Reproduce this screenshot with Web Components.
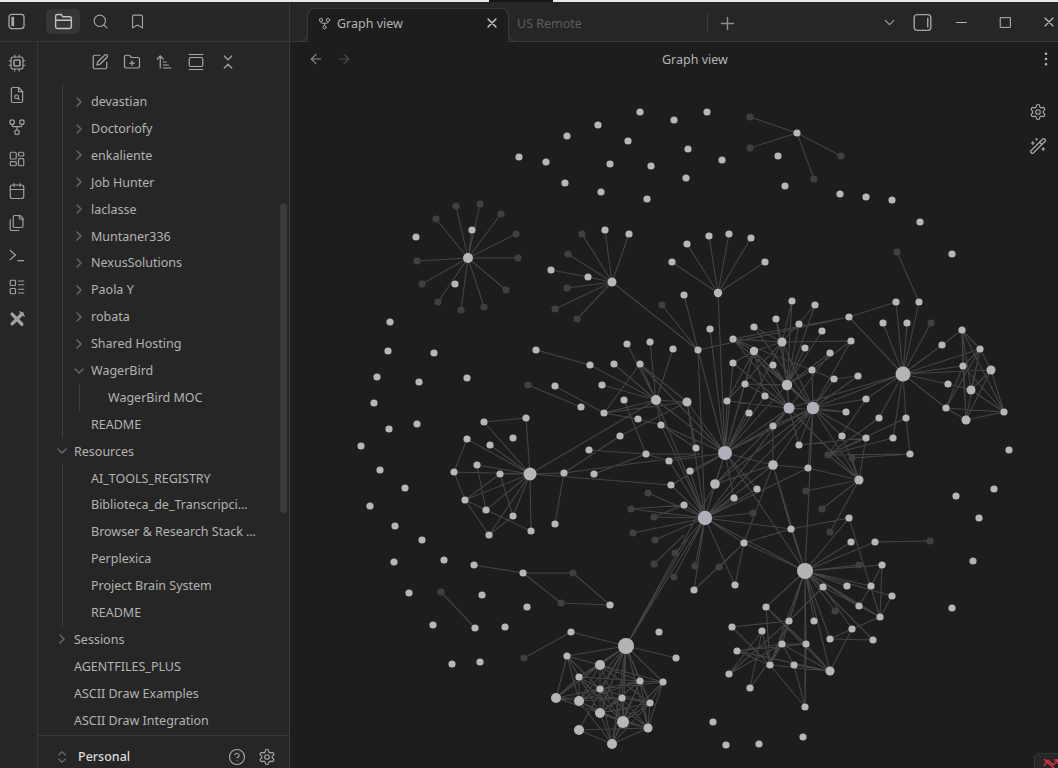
<!DOCTYPE html>
<html>
<head>
<meta charset="utf-8">
<style>
html, body { margin: 0; height: 100%; background: #1d1d1d; overflow: hidden; }
body { font-family: "Noto Sans", sans-serif; }
</style>
</head>
<body>
<app-shell>
    <title-bar slot="top"></title-bar>
    <app-ribbon slot="ribbon"></app-ribbon>
    <file-nav slot="side">
        <tree-group first>
            <tree-item closed in>devastian</tree-item>
            <tree-item closed in>Doctoriofy</tree-item>
            <tree-item closed in>enkaliente</tree-item>
            <tree-item closed in>Job Hunter</tree-item>
            <tree-item closed in>laclasse</tree-item>
            <tree-item closed in>Muntaner336</tree-item>
            <tree-item closed in>NexusSolutions</tree-item>
            <tree-item closed in>Paola Y</tree-item>
            <tree-item closed in>robata</tree-item>
            <tree-item closed in>Shared Hosting</tree-item>
            <tree-item open in>WagerBird</tree-item>
            <tree-group sub><tree-item in>WagerBird MOC</tree-item></tree-group>
            <tree-item in>README</tree-item>
        </tree-group>
        <tree-item open>Resources</tree-item>
        <tree-group>
            <tree-item in>AI_TOOLS_REGISTRY</tree-item>
            <tree-item in>Biblioteca_de_Transcripci…</tree-item>
            <tree-item in>Browser &amp; Research Stack …</tree-item>
            <tree-item in>Perplexica</tree-item>
            <tree-item in>Project Brain System</tree-item>
            <tree-item in>README</tree-item>
        </tree-group>
        <tree-item closed>Sessions</tree-item>
        <tree-item>AGENTFILES_PLUS</tree-item>
        <tree-item>ASCII Draw Examples</tree-item>
        <tree-item>ASCII Draw Integration</tree-item>
    </file-nav>
    <graph-view slot="main"></graph-view>
</app-shell>

<script>
const ICONS = {
    sidebarLeft: '<rect x="2.5" y="3" width="19" height="18" rx="3.5"/><rect x="5.5" y="6" width="3.5" height="12" rx="1" fill="currentColor" stroke="none"/>',
    sidebarRight: '<rect x="2.5" y="3" width="19" height="18" rx="3.5"/><path d="M18 7v10"/>',
    folder: '<path d="M3 18V6a2 2 0 0 1 2-2h4.2l2 2.500H19a2 2 0 0 1 2 2V18a2 2 0 0 1-2 2H5a2 2 0 0 1-2-2Z"/><path d="M3 10.500h18"/>',
    search: '<circle cx="11" cy="11" r="8"/><path d="m21 21-4.300-4.300"/>',
    bookmark: '<path d="m19 21-7-4-7 4V5a2 2 0 0 1 2-2h10a2 2 0 0 1 2 2v16z"/>',
    cpu: '<rect x="4" y="4" width="16" height="16" rx="3"/><rect x="8" y="8" width="8" height="8" rx="1.500" stroke-width="2.200"/><path d="M9 1.500V4M15 1.500V4M9 20v2.500M15 20v2.500M20 9h2.500M20 15h2.500M1.500 9H4M1.500 15H4"/>',
    fileSearch: '<path d="M14 2H6.500a2 2 0 0 0-2 2v16a2 2 0 0 0 2 2h11a2 2 0 0 0 2-2V7.500z"/><path d="M14 2v5.500h5.500"/><circle cx="11.500" cy="14.500" r="2.500"/><path d="m13.500 16.500 1.500 1.500"/>',
    fork: '<circle cx="12" cy="19" r="3"/><circle cx="5.500" cy="5.500" r="3"/><circle cx="18.500" cy="5.500" r="3"/><path d="M18.500 8.500v1.500c0 .8-.5 1.500-1.500 1.500H7c-1 0-1.500-.7-1.500-1.500V8.500M12 11.500V16"/>',
    dashboard: '<rect x="3" y="3" width="8" height="9" rx="1.500"/><rect x="14" y="3" width="7" height="5" rx="1.500"/><rect x="14" y="11.500" width="7" height="9.500" rx="1.500"/><rect x="3" y="15.500" width="8" height="5.500" rx="1.500"/>',
    calendar: '<rect x="3" y="4" width="18" height="18" rx="3"/><path d="M16 2v4M8 2v4M3 10h18"/>',
    files: '<path d="M20 7h-3a2 2 0 0 1-2-2V2"/><path d="M9 18a2 2 0 0 1-2-2V4a2 2 0 0 1 2-2h7l4 4v10a2 2 0 0 1-2 2Z"/><path d="M3 7.600v12.800A1.600 1.600 0 0 0 4.600 22h9.800"/>',
    terminal: '<path d="m3 6 7 6-7 6"/><path d="M13 19.500h8"/>',
    listGrid: '<rect x="3" y="3" width="7" height="7" rx="1"/><rect x="3" y="14" width="7" height="7" rx="1"/><path d="M14 4h7M14 9h7M14 15h7M14 20h7"/>',
    tools: '<path d="M5.500 5.500 18.500 19" stroke-width="4.500"/><path d="M19 5 5.500 18.500" stroke-width="4.500"/><path d="m16 2.500 5.500 5.500" stroke-width="2"/>',
    pen: '<path d="M12 3H5a2 2 0 0 0-2 2v14a2 2 0 0 0 2 2h14a2 2 0 0 0 2-2v-7"/><path d="M18.375 2.625a2.121 2.121 0 1 1 3 3L12 15l-4 1 1-4Z"/>',
    folderPlus: '<path d="M20 20a2 2 0 0 0 2-2V8a2 2 0 0 0-2-2h-7.900a2 2 0 0 1-1.690-.9L9.600 3.900A2 2 0 0 0 7.930 3H4a2 2 0 0 0-2 2v13a2 2 0 0 0 2 2Z"/><path d="M12 10.500v6M9 13.500h6"/>',
    sort: '<path d="m3 8 4-4 4 4"/><path d="M7 4v16"/><path d="M11 12h4M11 16h7M11 20h10"/>',
    gallery: '<path d="M3 2h18"/><rect x="3" y="6" width="18" height="12" rx="2"/><path d="M3 22h18"/>',
    collapse: '<path d="m7 20 5-5 5 5"/><path d="m7 4 5 5 5-5"/>',
    updown: '<path d="m7 15 5 5 5-5"/><path d="m7 9 5-5 5 5"/>',
    help: '<circle cx="12" cy="12" r="10"/><path d="M9.090 9a3 3 0 0 1 5.830 1c0 2-3 3-3 3"/><path d="M12 17h.01"/>',
    gear: '<path d="M12.220 2h-.44a2 2 0 0 0-2 2v.18a2 2 0 0 1-1 1.730l-.43.25a2 2 0 0 1-2 0l-.15-.08a2 2 0 0 0-2.730.73l-.22.38a2 2 0 0 0 .73 2.730l.15.1a2 2 0 0 1 1 1.720v.51a2 2 0 0 1-1 1.740l-.15.09a2 2 0 0 0-.73 2.730l.22.38a2 2 0 0 0 2.730.73l.15-.08a2 2 0 0 1 2 0l.43.25a2 2 0 0 1 1 1.730V20a2 2 0 0 0 2 2h.44a2 2 0 0 0 2-2v-.18a2 2 0 0 1 1-1.730l.43-.25a2 2 0 0 1 2 0l.15.08a2 2 0 0 0 2.730-.73l.22-.39a2 2 0 0 0-.73-2.730l-.15-.08a2 2 0 0 1-1-1.740v-.5a2 2 0 0 1 1-1.740l.15-.09a2 2 0 0 0 .73-2.730l-.22-.38a2 2 0 0 0-2.730-.73l-.15.08a2 2 0 0 1-2 0l-.43-.25a2 2 0 0 1-1-1.730V4a2 2 0 0 0-2-2z"/><circle cx="12" cy="12" r="3"/>',
    wand: '<path d="m21.640 3.640-1.280-1.280a1.210 1.210 0 0 0-1.720 0L2.360 18.640a1.210 1.210 0 0 0 0 1.720l1.280 1.280a1.200 1.200 0 0 0 1.720 0L21.640 5.360a1.200 1.200 0 0 0 0-1.720"/><path d="m14 7 3 3M5 6v4M19 14v4M10 2v2M7 8H3M21 16h-4M11 3H9"/>',
    close: '<path d="M18 6 6 18M6 6l12 12"/>',
    left: '<path d="m12 19-7-7 7-7"/><path d="M19 12H5"/>',
    right: '<path d="M5 12h14"/><path d="m12 5 7 7-7 7"/>',
    plus: '<path d="M5 12h14M12 5v14"/>',
    down: '<path d="m6 9 6 6 6-6"/>',
    chevRight: '<path d="m9 18 6-6-6-6"/>',
    minus: '<path d="M3 12h18"/>',
    square: '<rect x="3" y="3" width="18" height="18"/>',
    more: '<circle cx="12" cy="5" r="1"/><circle cx="12" cy="12" r="1"/><circle cx="12" cy="19" r="1"/>'
};

customElements.define('ui-icon', class extends HTMLElement {
    connectedCallback() {
        const size = this.getAttribute('size') || 18;
        const sw = this.getAttribute('sw') || 1.6;
        this.attachShadow({mode: 'open'}).innerHTML = `
            <style>:host { display: inline-flex; align-items: center; justify-content: center; } svg { display: block; }</style>
            <svg width="${size}" height="${size}" viewBox="0 0 24 24" fill="none" stroke="currentColor"
                 stroke-width="${sw}" stroke-linecap="round" stroke-linejoin="round">${ICONS[this.getAttribute('name')]}</svg>`;
    }
});

const shell = document.createElement('template');
shell.innerHTML = `
    <style>
    :host { display: flex; flex-direction: column; height: 768px; width: 1058px; overflow: hidden; position: relative; }
    .strip { display: flex; height: 2px; flex: none; background: #e9e9e9; }
    .strip i { width: 64px; margin-left: 489px; background: #161616; }
    .body { display: flex; flex: 1; min-height: 0; }
    .status {
        position: absolute; right: -6px; bottom: -6px; width: 28px; height: 19px;
        background: #262626; border: 1px solid #363636; border-radius: 6px; color: #e93147;
    }
    .status svg { position: absolute; left: 8px; top: 3px; }
    </style>
    <div class="strip"><i></i></div>
    <slot name="top"></slot>
    <div class="body">
        <slot name="ribbon"></slot>
        <slot name="side"></slot>
        <slot name="main"></slot>
    </div>
    <div class="status">
        <svg width="16" height="14" viewBox="0 0 16 14" fill="none" stroke="currentColor" stroke-width="1.300">
            <path d="M1 2 13 13M1 9l4-6 5 5 5-5M11 3h4v4"/>
        </svg>
    </div>
`;
customElements.define('app-shell', class extends HTMLElement {
    constructor() {
        super();
        this.attachShadow({mode: 'open'}).appendChild(shell.content.cloneNode(true));
    }
});

const titleBar = document.createElement('template');
titleBar.innerHTML = `
    <style>
    :host { display: flex; flex: none; height: 40px; box-sizing: border-box; background: #262626; border-bottom: 1px solid #383838; color: #a6a6a6; }
    .left { display: flex; align-items: center; width: 290px; box-sizing: border-box; border-right: 1px solid #383838; padding-left: 7px; flex: none; height: 39px; }
    .btn { width: 34px; height: 25px; border-radius: 5px; display: flex; align-items: center; justify-content: center; }
    .btn.on { background: #363636; color: #c4c4c4; }
    .tabs { display: flex; flex: 1; align-items: flex-end; padding-left: 17px; position: relative; min-width: 0; }
    .tab {
        position: relative; box-sizing: border-box; width: 202px; height: 34px; margin-bottom: -1px;
        background: #1d1d1d; border: 1px solid #383838; border-bottom: 0; border-radius: 8px 8px 0 0;
        display: flex; align-items: center; padding: 0 8px 5px 10px; gap: 6px; color: #b3b3b3; font-size: 12.500px;
    }
    .tab::before, .tab::after {
        content: ""; position: absolute; bottom: 1px; width: 6px; height: 6px; border-bottom: 1px solid #383838;
    }
    .tab::before { left: -8px; border-right: 1px solid #383838; border-bottom-right-radius: 6px; }
    .tab::after { right: -8px; border-left: 1px solid #383838; border-bottom-left-radius: 6px; }
    .tab span { flex: 1; }
    .tab .x { color: #d0d0d0; }
    .other { margin: 0 0 8px 8px; box-sizing: border-box; display: flex; align-items: center; color: #5e5e5e; font-size: 12.500px; width: 191px; flex: none; border-right: 1px solid #3c3c3c; height: 20px; }
    .plus { width: 39px; display: flex; justify-content: center; align-items: center; height: 36px; color: #8f8f8f; }
    .right { display: flex; align-items: center; margin-left: auto; height: 39px; padding-top: 1px; box-sizing: border-box; }
    .right ui-icon { flex: none; }
    </style>
    <div class="left">
        <ui-icon name="sidebarLeft" size="19" style="width:19px"></ui-icon>
        <div style="width:20px"></div>
        <div class="btn on"><ui-icon name="folder" size="21"></ui-icon></div>
        <div style="width:12px"></div>
        <ui-icon name="search" size="17"></ui-icon>
        <div style="width:20px"></div>
        <ui-icon name="bookmark" size="17"></ui-icon>
    </div>
    <div class="tabs">
        <div class="tab">
            <ui-icon name="fork" size="13"></ui-icon>
            <span>Graph view</span>
            <ui-icon class="x" name="close" size="16" sw="2"></ui-icon>
        </div>
        <div class="other">US Remote</div>
        <div class="plus"><ui-icon name="plus" size="21"></ui-icon></div>
        <div class="right">
            <ui-icon name="down" size="17" style="margin-right:14px"></ui-icon>
            <ui-icon name="sidebarRight" size="21" style="margin-right:22px"></ui-icon>
            <ui-icon name="minus" size="13" sw="1.800" style="margin-right:31px;color:#bbb"></ui-icon>
            <ui-icon name="square" size="13" sw="1.800" style="margin-right:29px;color:#bbb"></ui-icon>
            <ui-icon name="close" size="16" sw="1.800" style="margin-right:1px;color:#bbb"></ui-icon>
        </div>
    </div>
`;
customElements.define('title-bar', class extends HTMLElement {
    constructor() {
        super();
        this.attachShadow({mode: 'open'}).appendChild(titleBar.content.cloneNode(true));
    }
});

customElements.define('app-ribbon', class extends HTMLElement {
    constructor() {
        super();
        const names = ['cpu', 'fileSearch', 'fork', 'dashboard', 'calendar', 'files', 'terminal', 'listGrid', 'tools'];
        this.attachShadow({mode: 'open'}).innerHTML = `
            <style>
            :host { display: flex; flex-direction: column; align-items: center; flex: none; width: 38px; box-sizing: border-box;
                    background: #262626; border-right: 1px solid #383838; padding: 5px 4px 0 0; color: #a0a0a0; }
            ui-icon { height: 32px; width: 32px; }
            </style>
            ${names.map(n => `<ui-icon name="${n}" size="18"></ui-icon>`).join('')}`;
    }
});

const fileNav = document.createElement('template');
fileNav.innerHTML = `
    <style>
    :host { display: flex; flex-direction: column; flex: none; position: relative; width: 252px; box-sizing: border-box;
            background: #262626; border-right: 1px solid #383838; color: #b3b3b3; font-size: 12.500px; }
    .tools { display: flex; flex: none; height: 40px; margin-bottom: 2px; align-items: center; justify-content: center; gap: 14px; padding-left: 1px; color: #a6a6a6; }
    .tree { flex: 1; min-height: 0; overflow: hidden; padding-left: 36px; }
    .thumb { position: absolute; right: 2px; top: 161px; width: 7px; height: 310px; border-radius: 4px; background: #3b3b3b; }
    .vault { display: flex; flex: none; align-items: center; height: 33px; box-sizing: border-box; padding: 9px 0 0 17px; border-top: 1px solid #383838; color: #a6a6a6; }
    .vault b { flex: 1; margin-left: 8px; font-weight: 500; font-size: 12.500px; color: #dcdcdc; }
    .vault ui-icon + ui-icon { margin-left: 12px; }
    .vault .end { margin-right: 13px; }
    </style>
    <div class="tools">
        <ui-icon name="pen" size="18"></ui-icon>
        <ui-icon name="folderPlus" size="18"></ui-icon>
        <ui-icon name="sort" size="18"></ui-icon>
        <ui-icon name="gallery" size="18"></ui-icon>
        <ui-icon name="collapse" size="18"></ui-icon>
    </div>
    <div class="tree"><slot></slot></div>
    <div class="thumb"></div>
    <div class="vault">
        <ui-icon name="updown" size="16" style="color:#6e6e6e;margin-left:-1px"></ui-icon>
        <b>Personal</b>
        <ui-icon name="help" size="18"></ui-icon>
        <ui-icon name="gear" size="18" class="end"></ui-icon>
    </div>
`;
customElements.define('file-nav', class extends HTMLElement {
    constructor() {
        super();
        this.attachShadow({mode: 'open'}).appendChild(fileNav.content.cloneNode(true));
    }
});

customElements.define('tree-group', class extends HTMLElement {
    constructor() {
        super();
        this.attachShadow({mode: 'open'}).innerHTML = `
            <style>
            :host { display: block; margin-left: -12px; border-left: 1px solid #3f3f3f; padding-left: 11px; }
            :host([first]) { padding-top: 4.200px; }
            :host([sub]) { margin-left: 5px; }
            </style>
            <slot></slot>`;
    }
});

customElements.define('tree-item', class extends HTMLElement {
    constructor() {
        super();
        this.attachShadow({mode: 'open'}).innerHTML = `
            <style>
            :host { display: flex; align-items: center; height: 26.900px; white-space: nowrap; }
            :host([in]) { padding-left: 17px; }
            .c { display: none; width: 17px; margin-left: -17px; color: #666; }
            :host([closed]) .c.r, :host([open]) .c.d { display: block; }
            svg { display: block; margin-left: -3px; }
            </style>
            <span class="c r"><svg width="16" height="16" viewBox="0 0 24 24" fill="none" stroke="currentColor" stroke-width="2.400" stroke-linecap="round" stroke-linejoin="round">${ICONS.chevRight}</svg></span>
            <span class="c d"><svg width="16" height="16" viewBox="0 0 24 24" fill="none" stroke="currentColor" stroke-width="2.400" stroke-linecap="round" stroke-linejoin="round">${ICONS.down}</svg></span>
            <slot></slot>`;
    }
});

// graph data, in page coordinates: the svg viewBox starts at the canvas corner
const NODES = `
640,112 674,120 598,125 567,136 628,141 688,149 519,157 546,162 610,164 651,166 686,178 565,183 601,192 647,199
707,112 750,117,d 797,133 750,148,d 841,156,d 722,160 778,156 814,179,d 785,186 840,194 866,197 892,200 920,222 952,254 897,252,d
468,258,5 456,206,d 480,204,d 436,219,d 501,214,d 516,234,d 518,258,d 506,290,d 484,307,d 461,310,d 438,302,d 422,284,d 417,261,d 472,230 455,284 416,237
612,282,4.500 582,234,d 605,230 629,234 568,254,d 588,277 551,270 567,288,d 555,309,d 577,319,d
687,244 672,262 709,236 729,234 751,238 765,262 684,295 662,305,d 718,293,4.200
390,322 388,351 434,353 377,377 419,382 467,378 374,403 417,424 389,429 361,446 380,470 405,488 370,506 395,526 422,540 394,562 444,560 409,593 433,625 452,664 480,662 482,595 505,627 527,607
530,474,6.500 484,422 526,418 467,439 490,445 513,438 477,465 500,474 454,472 465,500 486,510 513,516 489,535 531,531 564,473 555,524 594,474
536,350 528,385,d 590,365 614,364 640,364 627,344 650,342 673,349 698,350 555,386 602,385 581,407 604,413 656,400,5 687,402,4.500 624,400 638,419 661,425 620,436 589,450 646,454 669,461 696,448 690,471 671,485
648,493,d 684,505 631,509,d 654,517,d 633,533,d 655,540,d 675,553,d 654,564,d 674,577,d 695,566,d 694,590
792,301 815,305 776,319 799,324 822,331 710,329 754,327 733,339 782,342,4.500 851,341 754,351,4.200 805,348 830,353 733,363 773,365 812,370 858,376 834,379 745,384 787,385,5.200 765,396 727,401 866,399 789,408,5.500,b 813,408,6.200,b 846,412 749,413 773,426 842,436 866,438 799,445 725,453,7,b 773,465,4.800 808,468 859,480,4.500 715,484,4.800 757,489 734,498 828,455,d 852,458,d 806,491,d 822,509,d 753,513,d 705,518,7.200,b
849,317 896,302 919,302 883,323 907,323 931,323,d 903,374,7.500 942,345 962,330 980,349 991,370,4.500 963,366 948,384 971,390,4.500 946,408 966,420,4.500 1004,412 1009,450 879,418 906,418 893,438 910,454 956,496 994,489 979,518
849,518 791,529 830,532,d 851,542 875,542 930,541,d 744,543 805,571,8 719,567,d 859,565,d 882,565 735,585 823,587 847,586 871,586 892,596 859,606 880,617 835,611,d 766,607 789,621 814,621 732,627 762,631 852,629 830,639 873,640 782,644 806,644 737,651 770,665 794,665 729,674 830,671,4.500 750,688 805,707 713,722 726,745 759,744 803,737 973,561,3.600,b 952,608
474,565 523,573 573,573,d 561,603,d 610,605 441,592,d 475,628 571,632 524,658,d 659,632 676,658
626,646,8 567,656 600,665,5 579,677 640,681 663,682 600,689 622,698 556,698,5 579,701,5 650,703 600,713,5 623,722,6 579,730,5 648,728,4.500 612,744,5
`;

const STARS = `
797,133: 750,117 750,148 841,156 814,179
468,258: 456,206 480,204 436,219 501,214 516,234 518,258 506,290 484,307 461,310 438,302 422,284 417,261 472,230
612,282: 582,234 605,230 629,234 568,254 588,277 567,288 555,309 577,319 698,350
588,277: 551,270
718,293: 687,244 672,262 709,236 729,234 751,238 765,262 725,453
698,350: 684,295 662,305 849,317 725,453 705,518
897,252: 919,302
530,474: 484,422 526,418 467,439 490,445 477,465 500,474 454,472 465,500 486,510 513,516 489,535 531,531 564,473 671,485 656,400
484,422: 526,418
467,439: 454,472
477,465: 486,510
500,474: 513,516 465,500
454,472: 465,500
465,500: 486,510 489,535
486,510: 531,531
489,535: 513,516
564,473: 555,524 620,436 696,455
620,436: 687,402
594,474: 646,454
589,450: 646,454
646,454: 700,454 624,400
536,350: 590,365
590,365: 656,400
528,385: 581,407
555,386: 604,413
604,413: 656,400 687,402 640,364 638,419
638,419: 661,425
656,400: 614,364 640,364 627,344 650,342 673,349 602,385 687,402 725,453 705,518 661,425
640,364: 725,453 687,402
687,402: 696,448 725,453 705,518
661,425: 705,518 725,453 696,448
669,461: 725,453 705,518 646,454
690,471: 725,453 705,518
671,485: 725,453 705,518
648,493: 705,518
684,505: 705,518 631,509 654,517
631,509: 705,518
654,517: 705,518
633,533: 705,518
655,540: 705,518
654,564: 684,535
675,553: 705,518
695,566: 705,518
674,577: 705,518
694,590: 705,518
705,518: 715,484 734,498 757,489 744,543 735,585 725,453 626,646 753,513
725,453: 710,329 715,484 727,401 745,384 749,413 773,426 765,396 734,498 757,489 773,465 789,408 813,408 787,385 782,342 754,351 733,363
715,484: 789,408 813,408 773,465 626,646
626,646: 690,535 571,632 676,658
571,632: 524,658
474,565: 523,573
523,573: 573,573 561,603
573,573: 610,605
561,603: 610,605
441,592: 475,628
787,385: 792,301 815,305 776,319 799,324 822,331 782,342 805,348 773,365 812,370 754,351 733,339 830,353 789,408 813,408 745,384
782,342: 851,341 733,339 754,327 776,319 792,301 815,305 813,408 789,408 727,401
754,351: 733,339 733,363 813,408 789,408 782,342 745,384 765,396 727,401
813,408: 851,341 858,376 834,379 866,399 812,370 846,412 842,436 866,438 859,480 808,468 773,426 705,518 733,339 754,327 903,374 773,465 799,445
789,408: 745,384 727,401 765,396 846,412 799,445 705,518 773,426 733,363 733,339 830,353 903,374 859,480
773,465: 705,518 744,543 791,529 808,468 773,426
859,480: 866,438 842,436 808,468 806,491 822,509 828,455 852,458 830,532
808,468: 705,518
799,445: 866,438
828,455: 893,438 906,418 866,438 910,454 879,418 866,399
852,458: 910,454
834,379: 858,376 733,339
851,341: 812,370
849,317: 896,302 903,374 733,339
903,374: 896,302 919,302 883,323 907,323 931,323 942,345 980,349 963,366 991,370 948,384 946,408 879,418 906,418 893,438 866,399
906,418: 910,454
942,345: 962,330
962,330: 980,349 963,366 966,420 1004,412 971,390
980,349: 991,370 963,366 971,390 946,408 966,420
991,370: 971,390 966,420 1004,412
963,366: 946,408 966,420 1004,412
948,384: 971,390
971,390: 1004,412
946,408: 1004,412 966,420
966,420: 1004,412
791,529: 849,518 805,571 705,518 744,543
744,543: 705,518 719,567 735,585 694,590 805,571
805,571: 849,518 851,542 875,542 859,565 882,565 847,586 871,586 892,596 880,617 823,587 859,606 835,611 873,640 830,639 830,671 814,621 806,644 805,707 789,621 782,644 766,607 770,665 705,518 725,453 773,465 813,408
875,542: 930,541
849,518: 880,617
882,565: 871,586 880,617
871,586: 859,606
892,596: 880,617
880,617: 852,629 823,587
852,629: 830,639 830,671 823,587
830,639: 873,640
766,607: 770,665 806,644 830,671
789,621: 732,627 823,587 770,665
732,627: 770,665
762,631: 729,674 750,688 770,665
737,651: 806,644 830,671 770,665 782,644
729,674: 782,644 789,621
750,688: 782,644
782,644: 794,665 830,671 806,644 770,665
806,644: 830,671 805,707
770,665: 830,671 805,707
794,665: 830,671 805,707
`;

// the bottom cluster is a near complete mesh, so it is generated
const MESH = [[626,646],[567,656],[600,665],[579,677],[640,681],[663,682],[600,689],[622,698],[556,698],[579,701],[650,703],[600,713],[623,722],[579,730],[648,728],[612,744]];

customElements.define('graph-canvas', class extends HTMLElement {
    connectedCallback() {
        let lines = '';
        const line = (a, b) => lines += `M${a[0]} ${a[1]}L${b[0]} ${b[1]}`;
        STARS.trim().split('\n').forEach(row => {
            const [hub, rest] = row.split(':');
            const h = hub.split(',');
            rest.trim().split(/\s+/).forEach(p => line(h, p.split(',')));
        });
        MESH.forEach((a, i) => MESH.slice(i + 1).forEach((b, j) => {
            const d = Math.hypot(a[0] - b[0], a[1] - b[1]);
            if (i === 0 ? d < 105 : (d < 70 && (i + j) % 6 !== 0)) line(a, b);
        }));
        const dots = NODES.trim().split(/\s+/).map(n => {
            const p = n.split(',');
            let r = 3.6, fill = '#b7b7b7';
            p.slice(2).forEach(v => {
                if (v === 'd') fill = '#404040';
                else if (v === 'b') fill = '#b0b0bb';
                else r = parseFloat(v);
            });
            if (r > 6.5 && fill === '#b7b7b7') fill = '#b4b4b4';
            return `<circle cx="${p[0]}" cy="${p[1]}" r="${r}" fill="${fill}"/>`;
        }).join('');
        this.attachShadow({mode: 'open'}).innerHTML = `
            <style>:host { display: block; flex: 1; min-height: 0; } svg { display: block; }</style>
            <svg width="768" height="692" viewBox="290 76 768 692">
                <path d="${lines}" stroke="#444" stroke-width="1.100" fill="none"/>
                ${dots}
            </svg>`;
    }
});

const graphView = document.createElement('template');
graphView.innerHTML = `
    <style>
    :host { display: flex; flex-direction: column; flex: 1; min-width: 0; position: relative; background: #1d1d1d; color: #b3b3b3; }
    .head { display: grid; grid-template-columns: 354px auto 1fr; align-items: center; height: 34px; flex: none; font-size: 12.500px; padding: 0 3px 0 18px; }
    .nav { display: flex; gap: 12px; color: #8f8f8f; }
    .nav .off { color: #4e4e4e; }
    .more { justify-self: end; }
    .controls { position: absolute; right: 11px; top: 61px; display: flex; flex-direction: column; gap: 16px; color: #a6a6a6; }
    </style>
    <div class="head">
        <div class="nav"><ui-icon name="left" size="16"></ui-icon><ui-icon class="off" name="right" size="16"></ui-icon></div>
        <div>Graph view</div>
        <ui-icon class="more" name="more" size="18"></ui-icon>
    </div>
    <graph-canvas></graph-canvas>
    <div class="controls">
        <ui-icon name="gear" size="18"></ui-icon>
        <ui-icon name="wand" size="18"></ui-icon>
    </div>
`;
customElements.define('graph-view', class extends HTMLElement {
    constructor() {
        super();
        this.attachShadow({mode: 'open'}).appendChild(graphView.content.cloneNode(true));
    }
});
</script>
</body>
</html>
